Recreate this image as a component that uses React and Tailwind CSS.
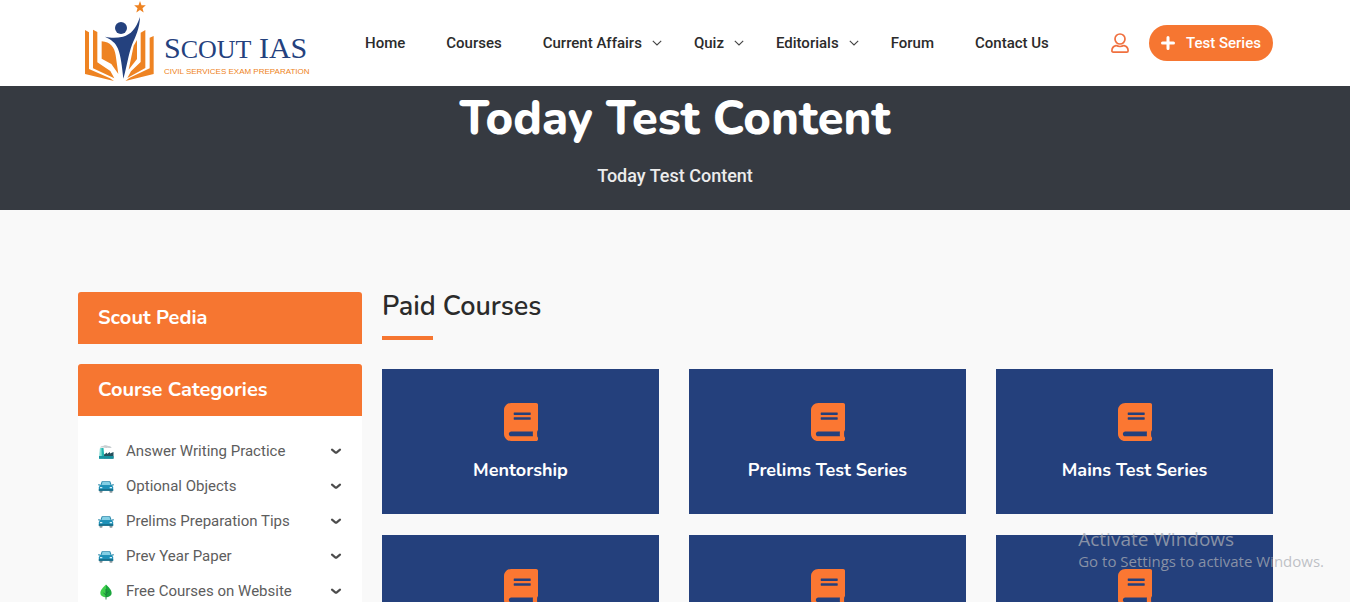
import React from "react";
import { FaBook } from "react-icons/fa";

const navItems = [
  { label: "Home" },
  { label: "Courses" },
  { label: "Current Affairs", menu: true },
  { label: "Quiz", menu: true },
  { label: "Editorials", menu: true },
  { label: "Forum" },
  { label: "Contact Us" },
];

const categories = [
  { label: "Answer Writing Practice", icon: FactoryIcon },
  { label: "Optional Objects", icon: CarIcon },
  { label: "Prelims Preparation Tips", icon: CarIcon },
  { label: "Prev Year Paper", icon: CarIcon },
  { label: "Free Courses on Website", icon: LeafIcon },
];

const courses = ["Mentorship", "Prelims Test Series", "Mains Test Series", "", "", ""];

function LogoMark() {
  return (
    <svg viewBox="0 0 240 258" className="h-[86px] w-20 shrink-0" aria-hidden="true">
      <g fill="#ee8322">
        <path d="M180 3l4.500 12.500 13 .5-10 8.500 3.500 13-11-7.500-11 7.500 3.500-13-10-8.500 13-.5z" />
        <path d="M15 90l12 7v110l63 28 12 8-87-21z" />
        <path d="M39 89l13 7v91l39 26 12 22-64-30z" />
        <path d="M65 124c26 2 39 18 42 42l8 56-21-30-29-16z" />
        <path d="M221 108l-12 5v92l-60 28-13 10 85-21z" />
        <path d="M196 90l-14 8v88l-29 28-11 20 54-30z" />
        <path d="M171 120l-10 17-15 72 25-32z" />
      </g>
      <circle cx="123" cy="84" r="18" fill="#24417e" />
      <path d="M75 110c20 5 36 4 54 0 24-7 38-22 51-59-1 34-13 58-24 83-11 29-15 65-26 102-4-36-7-67-16-90-7-18-20-27-39-36z" fill="#24417e" />
    </svg>
  );
}

function ThinChevron() {
  return (
    <svg viewBox="0 0 10 6" className="h-[6px] w-[10px]" fill="none" stroke="#444" strokeWidth="1.100" aria-hidden="true">
      <path d="M.8.8L5 5 9.200.8" />
    </svg>
  );
}

function BoldChevron() {
  return (
    <svg viewBox="0 0 12 7" className="h-[7px] w-3" fill="none" stroke="#4c4c4c" strokeWidth="2.200" strokeLinecap="round" aria-hidden="true">
      <path d="M2 1.700L5.200 4.300Q6 4.900 6.800 4.300L10 1.700" />
    </svg>
  );
}

function UserIcon() {
  return (
    <svg viewBox="0 0 18 20" className="h-5 w-[18px]" fill="none" stroke="#f0703f" strokeWidth="1.700" aria-hidden="true">
      <circle cx="9" cy="6" r="5" />
      <path d="M5 12.600c1.300.6 2.600.9 4 .9s2.700-.3 4-.9c2.700.6 4.100 2.300 4.100 5.100 0 .9-.5 1.400-1.300 1.400H2.200c-.8 0-1.300-.5-1.300-1.400 0-2.800 1.400-4.500 4.100-5.100z" />
    </svg>
  );
}

function PlusIcon() {
  return (
    <svg viewBox="0 0 14 14" className="size-[14px]" fill="none" stroke="#fff" strokeWidth="3" strokeLinecap="round" aria-hidden="true">
      <path d="M7 1.500v11M1.500 7h11" />
    </svg>
  );
}

function FactoryIcon() {
  return (
    <svg viewBox="0 0 16 16" className="size-4" aria-hidden="true">
      <path d="M2 3.500c1-2 3-1 4-2 2-.8 3 .7 5 .4 1.500 0 2.500 1 2.500 2-2 .6-3-.4-4.500 0-2 .4-3-.8-4.500-.3z" fill="#c9ced1" />
      <path d="M2 4h3.500l1 10.500H1.500z" fill="#1fb5b0" />
      <path d="M2 4h1.500l.3 10.500H1.500z" fill="#7fe0d4" />
      <path d="M6 10.500l3-2V10l3-2v1.500l3.500-1.500v6.500H6z" fill="#24505c" />
      <path d="M1 12h14.500v2.800H1z" fill="#1593a0" />
    </svg>
  );
}

function CarIcon() {
  return (
    <svg viewBox="0 0 16 13" className="h-[13px] w-4" aria-hidden="true">
      <path d="M1.500 9h3v3a.8.8 0 01-.8.8H2.300a.8.8 0 01-.8-.8zM11.500 9h3v3a.8.8 0 01-.8.8h-1.400a.8.8 0 01-.8-.8z" fill="#8a979c" />
      <path d="M3.800 1.200h8.400L14 6H2z" fill="#2385a8" />
      <path d="M4.500 2.100h7l1.200 3.200H3.300z" fill="#83cfe5" />
      <path d="M0 4.300h1.800v1.400H.8zM16 4.300h-1.800v1.400h1z" fill="#2385a8" />
      <path d="M2.200 5.300h11.600l1.400 1.700v3.700H.8V7z" fill="#1e91b8" />
      <path d="M.8 9.300h14.400v1.400H.8z" fill="#14657f" />
      <path d="M2 6.900h2.300v1.300H2zM11.700 6.900H14v1.300h-2.300z" fill="#d8f2f8" />
    </svg>
  );
}

function LeafIcon() {
  return (
    <svg viewBox="0 0 16 16" className="size-4" aria-hidden="true">
      <path d="M8 .5C10.500 3 14 6 13.600 9.500 13.300 12 10.500 13.300 8 13.300z" fill="#1aa53c" />
      <path d="M8 .5C5.500 3 2 6 2.400 9.500c.3 2.500 3.100 3.800 5.600 3.800z" fill="#3fd04c" />
      <path d="M8 5v10.500M8 9.500l2.500-2M8 11L5.500 9" stroke="#16803a" strokeWidth=".9" fill="none" />
    </svg>
  );
}

export default function App() {
  return (
    <div className="relative h-screen overflow-hidden bg-[#f9f9f9] font-[Roboto,sans-serif]">
      <header className="bg-white">
        <div className="mx-auto flex h-[86px] max-w-[1350px] items-center pr-[77px] pl-20">
          <a href="#home" className="flex shrink-0 items-center" aria-label="Scout IAS home">
            <LogoMark />
            <span className="flex w-[150px] flex-col pt-[26px] pl-1">
              <span className="font-['Liberation_Serif',serif] text-[30px] leading-7 whitespace-nowrap text-[#24417e]">
                S<span className="text-[26px]">COUT</span> IAS
              </span>
              <span className="pt-[2px] font-['Liberation_Sans',sans-serif] text-[8px] leading-3 whitespace-nowrap text-[#ee8322]">
                CIVIL SERVICES EXAM PREPARATION
              </span>
            </span>
          </a>
          <nav className="ml-[55px] flex items-center text-[15px] font-medium whitespace-nowrap text-[#2b2b2b]">
            {navItems.map((item) => (
              <a
                key={item.label}
                href="#menu"
                className={item.menu ? "mr-8 flex items-center gap-[10px]" : "mr-[41px] flex items-center"}
              >
                {item.label}
                {item.menu && <ThinChevron />}
              </a>
            ))}
          </nav>
          <div className="ml-auto flex shrink-0 items-center gap-5">
            <a href="#account" aria-label="Account">
              <UserIcon />
            </a>
            <button
              type="button"
              className="flex h-9 w-[124px] items-center justify-center gap-[11px] rounded-full bg-[#f67631] text-[15px] font-medium whitespace-nowrap text-white"
            >
              <PlusIcon />
              Test Series
            </button>
          </div>
        </div>
      </header>

      <section className="flex h-[124px] flex-col items-center bg-[#363a41] text-white">
        <h1 className="pt-[3px] font-[Nunito,Lato,sans-serif] text-[47px] leading-[60px] font-extrabold">
          Today Test Content
        </h1>
        <p className="pt-[13px] text-[18px] leading-7 font-medium text-[#ececec]">Today Test Content</p>
      </section>

      <main className="mx-auto flex max-w-[1350px] items-start gap-5 pt-[82px] pr-[77px] pl-[78px]">
        <aside className="flex w-[284px] shrink-0 flex-col gap-5">
          <h2 className="rounded-t-[3px] bg-[#f67631] px-5 font-[Nunito,Lato,sans-serif] text-[20px] leading-[52px] font-bold text-white">
            Scout Pedia
          </h2>
          <section className="bg-white">
            <h2 className="rounded-t-[3px] bg-[#f67631] px-5 font-[Nunito,Lato,sans-serif] text-[20px] leading-[52px] font-bold text-white">
              Course Categories
            </h2>
            <ul className="px-5 pt-[18px] pb-5">
              {categories.map(({ label, icon: Icon }) => (
                <li key={label}>
                  <button type="button" className="flex h-[35px] w-full items-center gap-3 text-[15px] text-[#5d5d5d]">
                    <Icon />
                    <span className="grow text-left">{label}</span>
                    <BoldChevron />
                  </button>
                </li>
              ))}
            </ul>
          </section>
        </aside>

        <section className="min-w-0 grow">
          <h2 className="font-[Nunito,Lato,sans-serif] text-[27px] leading-[30px] font-semibold text-[#2b2b2b]">
            Paid Courses
          </h2>
          <div className="mt-[14px] h-1 w-[51px] bg-[#f67631]" />
          <div className="mt-[29px] grid grid-cols-3 gap-x-[30px] gap-y-[21px]">
            {courses.map((name, i) => (
              <a
                key={i}
                href="#course"
                aria-label={name || "Course"}
                className="flex h-[145px] flex-col items-center bg-[#24407c] pt-[34px]"
              >
                <FaBook className="h-[38px] w-[34px] text-[#fb7732]" preserveAspectRatio="none" />
                <span className="mt-[17px] font-[Nunito,Lato,sans-serif] text-[18px] leading-6 font-bold text-white">
                  {name}
                </span>
              </a>
            ))}
          </div>
        </section>
      </main>

      <div className="pointer-events-none absolute right-[26px] bottom-[31px] font-['Open_Sans',sans-serif] whitespace-nowrap text-[#aaadb4]/75">
        <p className="text-[19px] leading-6">Activate Windows</p>
        <p className="text-[15px] leading-5">Go to Settings to activate Windows.</p>
      </div>
    </div>
  );
}
